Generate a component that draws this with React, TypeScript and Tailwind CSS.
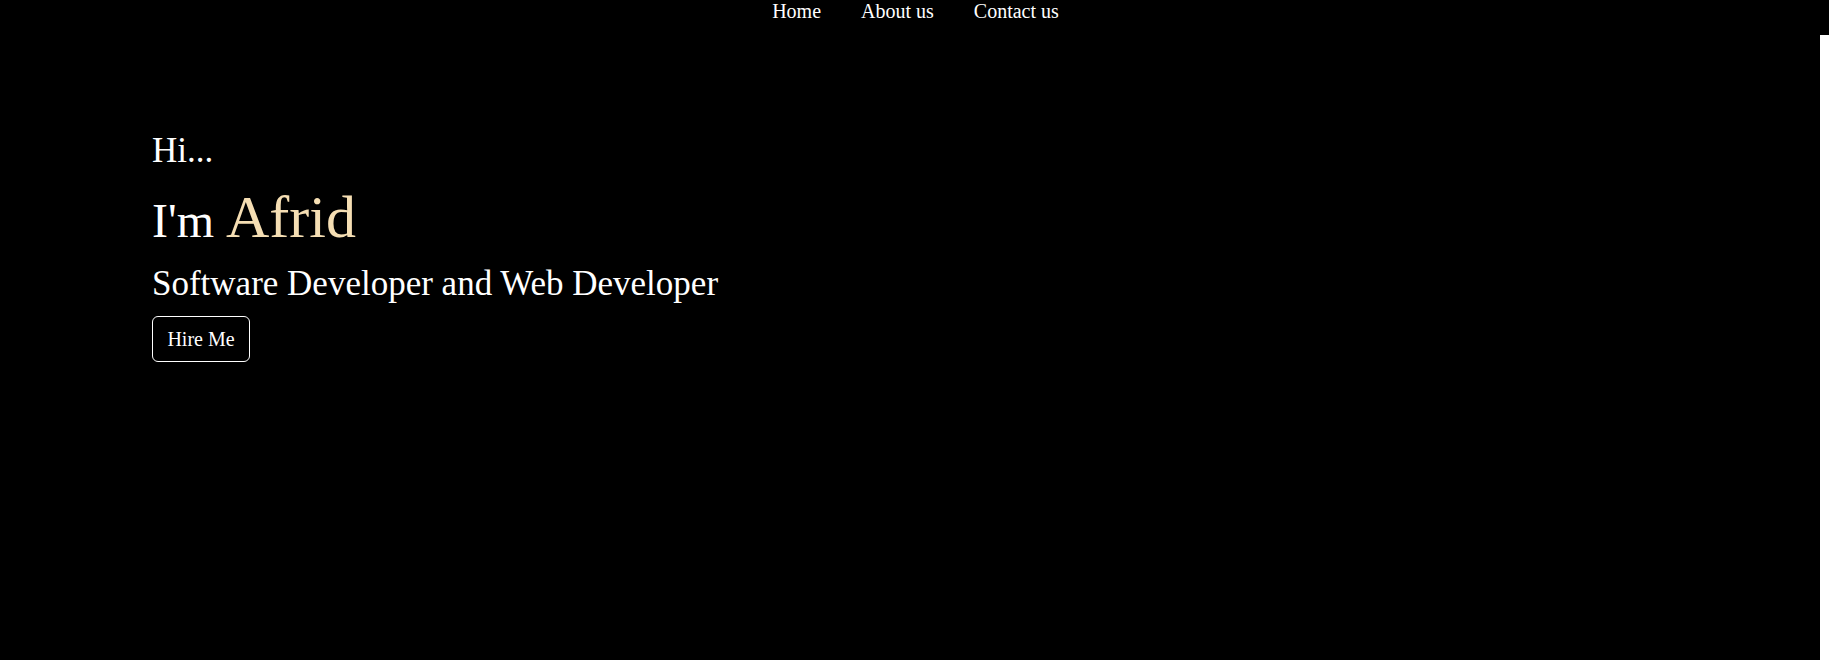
const navLinks = ["Home", "About us", "Contact us"];

export default function App() {
  return (
    <div className="min-h-screen bg-white font-['Liberation_Serif','Times_New_Roman',serif] text-white">
      <nav className="flex h-[35px] w-full items-start justify-center gap-10 bg-black pl-[2px]">
        {navLinks.map((link) => (
          <a key={link} href="#" className="text-[20px] leading-[23px] text-white">
            {link}
          </a>
        ))}
      </nav>

      <section className="h-[625px] w-[1820px] bg-black pl-[152px] pt-[96px]">
        <p className="text-[35px] leading-[40px]">Hi...</p>

        <h1 className="mt-[11px] text-[48px] leading-[70px] text-white">
          I'm <span className="text-[60px] leading-[70px] text-[#f5deb3]">Afrid</span>
        </h1>

        <p className="mt-[8px] text-[35px] leading-[40px]">
          Software Developer and Web Developer
        </p>

        <button
          type="button"
          className="mt-[12px] flex h-[46px] w-[98px] items-center justify-center rounded-[6px] border border-white bg-black text-[20px] leading-[23px] text-white"
        >
          Hire Me
        </button>
      </section>
    </div>
  );
}
